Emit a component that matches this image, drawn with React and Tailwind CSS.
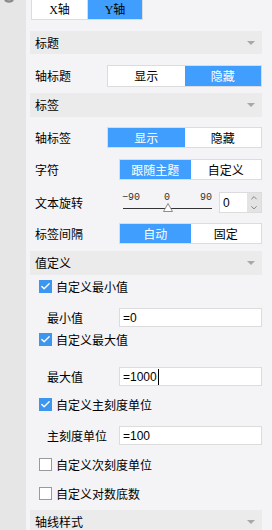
import { Check, ChevronUp, ChevronDown } from "lucide-react";

const cjk = "font-['Noto_Sans_CJK_SC',sans-serif]";

const Header = ({ title, className }) => (
  <div
    className={`flex shrink-0 items-center justify-between bg-[#ebebeb] pl-[5px] pr-[7px] text-[12px] text-black ${className}`}
  >
    <span>{title}</span>
    <svg width="8" height="4" viewBox="0 0 8 4">
      <path d="M0 0 L8 0 L4 4 Z" fill="#a8a8a8" />
    </svg>
  </div>
);

const Toggle = ({ items, active, className }) => (
  <div className={`flex border border-[#dcdcdc] bg-white text-[12px] ${className}`}>
    {items.map((it, i) => (
      <div
        key={it}
        className={`flex flex-1 items-center justify-center ${
          i === active ? "bg-[#409eff] text-white" : "text-black"
        }`}
      >
        {it}
      </div>
    ))}
  </div>
);

const Row = ({ label, children, className }) => (
  <div className={`flex shrink-0 items-center pl-[5px] text-[12px] ${className}`}>
    <span className="flex-1">{label}</span>
    {children}
  </div>
);

const CheckRow = ({ label, checked, className }) => (
  <div className={`flex h-[17px] shrink-0 items-center pl-[9px] text-[12px] ${className}`}>
    {checked ? (
      <div className="flex h-[13px] w-[13px] items-center justify-center bg-[#3c95ee]">
        <Check size={11} strokeWidth={3} color="white" />
      </div>
    ) : (
      <div className="h-[13px] w-[13px] border border-[#9a9a9a] bg-white" />
    )}
    <span className="ml-[4px]">{label}</span>
  </div>
);

const InputRow = ({ label, value, cursor, className }) => (
  <div className={`flex h-[19px] shrink-0 items-center pl-[17px] text-[12px] ${className}`}>
    <span className="flex-1">{label}</span>
    <div className="flex h-full w-[143px] items-center border border-[#dcdcdc] bg-white pl-[3px] font-['Liberation_Sans',sans-serif] text-[12px]">
      {value}
      {cursor && <span className="ml-px h-[16px] w-px bg-black" />}
    </div>
  </div>
);

export default function App() {
  return (
    <div className={`flex h-[530px] w-[272px] overflow-hidden ${cjk} text-black`}>
      <div className="w-[26px] shrink-0 bg-[#e6e6e6]">
        <svg width="14" height="4" viewBox="0 0 14 4" className="ml-[2px]">
          <path d="M3 0 A5 4 0 0 0 11 0" stroke="#8a8a8a" strokeWidth="2.5" fill="none" />
        </svg>
      </div>
      <div className="flex flex-1 flex-col bg-[#f4f4f6] pl-[4px] pr-[10px]">
        <div className="flex shrink-0 pl-px font-['Liberation_Serif','Noto_Sans_CJK_SC',serif] text-[12px]">
          <div className="flex h-[20px] w-[57px] items-center justify-center border-x border-b border-[#dcdcdc] bg-white">
            X轴
          </div>
          <div className="flex h-[20px] w-[55px] items-center justify-center border-r border-b border-[#dcdcdc] bg-[#409eff]">
            Y轴
          </div>
        </div>

        <Header title="标题" className="mt-[11px] h-[23px]" />
        <Row label="轴标题" className="mt-[11px] h-[22px]">
          <Toggle items={["显示", "隐藏"]} active={1} className="h-full w-[155px]" />
        </Row>

        <Header title="标签" className="mt-[6px] h-[24px]" />
        <Row label="轴标签" className="mt-[10px] h-[21px]">
          <Toggle items={["显示", "隐藏"]} active={0} className="h-full w-[155px]" />
        </Row>
        <Row label="字符" className="mt-[11px] h-[21px]">
          <Toggle items={["跟随主题", "自定义"]} active={0} className="h-full w-[143px]" />
        </Row>
        <Row label="文本旋转" className="mt-[12px] h-[21px]">
          <div className="flex h-full w-[143px] items-center">
            <div className="relative h-full w-[93px] font-['Liberation_Mono',monospace] text-[10px] leading-none text-[#333]">
              <div className="flex justify-between pl-[3px] pt-[1px]">
                <span>−90</span>
                <span className="-ml-[6px]">0</span>
                <span>90</span>
              </div>
              <div className="ml-[4px] mt-[5px] h-px bg-[#333]" />
              <svg width="10" height="9" viewBox="0 0 10 9" className="absolute left-[44px] top-[11px]">
                <path d="M5 0.5 L9.5 8.5 L0.5 8.5 Z" fill="white" stroke="#8c8c8c" />
              </svg>
            </div>
            <div className="ml-[7px] flex h-full w-[43px] border border-[#dcdcdc] bg-white">
              <span className="flex flex-1 items-center pl-[3px] font-['Liberation_Sans',sans-serif] text-[12px]">
                0
              </span>
              <div className="flex w-[14px] flex-col items-center justify-center bg-[#e3e3e3] text-[#444]">
                <ChevronUp size={10} strokeWidth={1.5} />
                <ChevronDown size={10} strokeWidth={1.5} />
              </div>
            </div>
          </div>
        </Row>
        <Row label="标签间隔" className="mt-[10px] h-[21px]">
          <Toggle items={["自动", "固定"]} active={0} className="h-full w-[143px]" />
        </Row>

        <Header title="值定义" className="mt-[7px] h-[24px]" />
        <CheckRow label="自定义最小值" checked className="mt-[3px]" />
        <InputRow label="最小值" value="=0" className="mt-[13px]" />
        <CheckRow label="自定义最大值" checked className="mt-[4px]" />
        <InputRow label="最大值" value="=1000" cursor className="mt-[19px]" />
        <CheckRow label="自定义主刻度单位" checked className="mt-[10px]" />
        <InputRow label="主刻度单位" value="=100" className="mt-[13px]" />
        <CheckRow label="自定义次刻度单位" className="mt-[11px]" />
        <CheckRow label="自定义对数底数" className="mt-[12px]" />

        <Header title="轴线样式" className="mt-[8px] h-[24px]" />
      </div>
    </div>
  );
}
